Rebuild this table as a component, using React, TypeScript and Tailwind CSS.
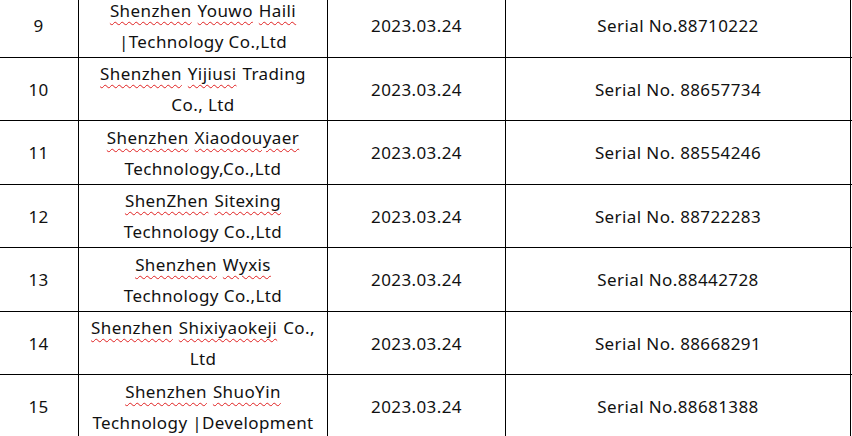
const rows = [
  {
    no: "9",
    h: "h-[64px]",
    name: [["Shenzhen", "Youwo", "Haili"], "|Technology Co.,Ltd"],
    serial: "Serial No.88710222",
  },
  {
    no: "10",
    h: "h-[63px]",
    name: [["Shenzhen", "Yijiusi", "!Trading"], "Co., Ltd"],
    serial: "Serial No. 88657734",
  },
  {
    no: "11",
    h: "h-[64px]",
    name: [["Shenzhen", "Xiaodouyaer"], "Technology,Co.,Ltd"],
    serial: "Serial No. 88554246",
  },
  {
    no: "12",
    h: "h-[63px]",
    name: [["ShenZhen", "Sitexing"], "Technology Co.,Ltd"],
    serial: "Serial No. 88722283",
  },
  {
    no: "13",
    h: "h-[64px]",
    name: [["Shenzhen", "Wyxis"], "Technology Co.,Ltd"],
    serial: "Serial No.88442728",
  },
  {
    no: "14",
    h: "h-[63px]",
    name: [["Shenzhen", "Shixiyaokeji", "!Co.,"], "Ltd"],
    serial: "Serial No. 88668291",
  },
  {
    no: "15",
    h: "h-[64px]",
    name: [["Shenzhen", "ShuoYin"], "Technology |Development"],
    serial: "Serial No.88681388",
  },
];

// words starting with "!" are spelled right, so no squiggle
const Word = ({ w }: { w: string }) =>
  w.startsWith("!") ? (
    <span>{w.slice(1)}</span>
  ) : (
    <span className="underline decoration-wavy decoration-[#e02020] decoration-1 underline-offset-[4px]">
      {w}
    </span>
  );

export default function App() {
  return (
    <div className="w-[852px] h-[436px] overflow-hidden bg-white text-[17px] tracking-[0.4px] leading-[31px] text-[#111] [font-family:'Noto_Sans','Open_Sans',sans-serif]">
      <div className="-mt-[6px] flex flex-col">
        {rows.map((r) => (
          <div
            key={r.no}
            className={`grid grid-cols-[79px_249px_178px_345px] border-b border-black ${r.h}`}
          >
            <div className="flex items-center justify-center border-r border-black pr-[1px]">
              {r.no}
            </div>
            <div className="flex flex-col items-center justify-center border-r border-black text-center">
              <div className="flex gap-[6px]">
                {(r.name[0] as string[]).map((w) => (
                  <Word key={w} w={w} />
                ))}
              </div>
              <div>{r.name[1] as string}</div>
            </div>
            <div className="flex items-center justify-center border-r border-black">
              2023.03.24
            </div>
            <div className="flex items-center justify-center border-r border-black">
              {r.serial}
            </div>
          </div>
        ))}
      </div>
    </div>
  );
}
